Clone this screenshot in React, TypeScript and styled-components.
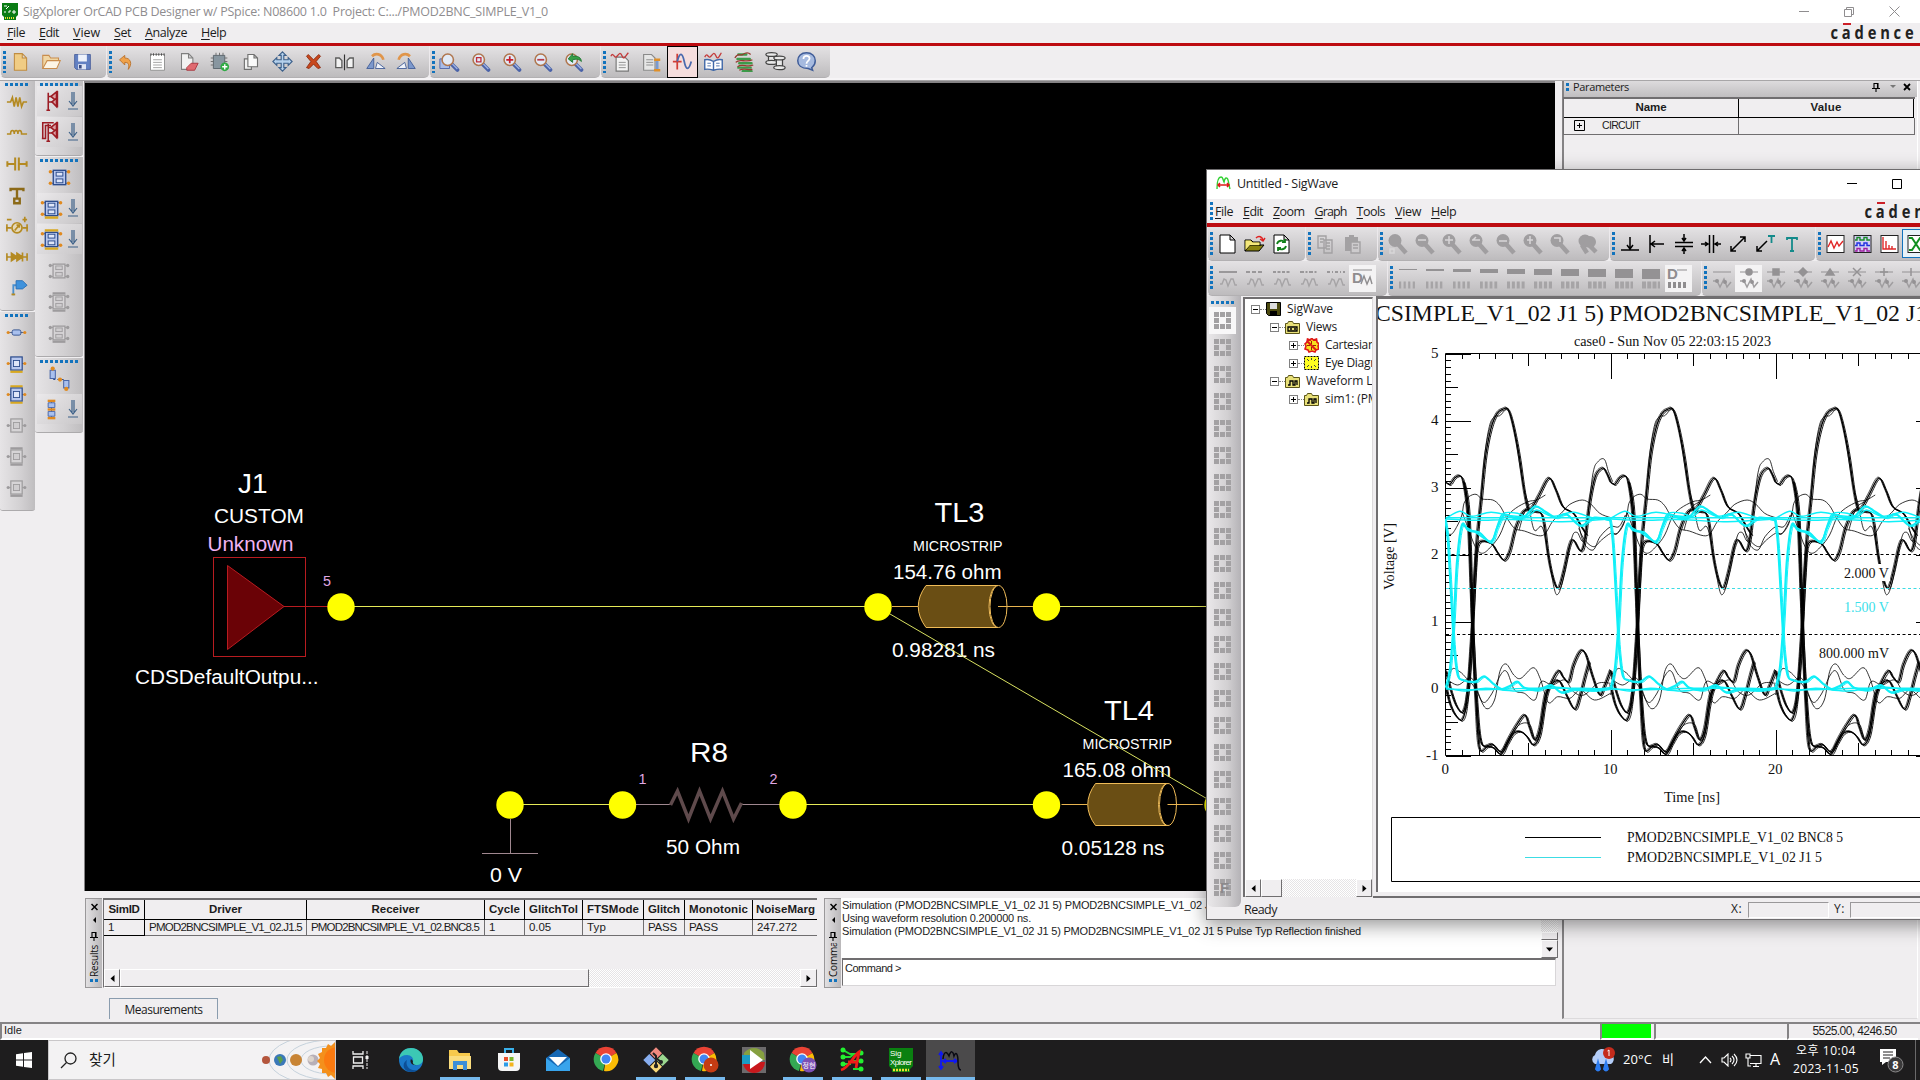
import React, { useLayoutEffect, useRef } from 'react';
import styled, { createGlobalStyle, css } from 'styled-components';

const UI = `"Open Sans", "Noto Sans", "Noto Sans CJK KR", sans-serif`;
const ARIAL = `"Liberation Sans", "Noto Sans CJK KR", sans-serif`;
const SERIF = `"Liberation Serif", serif`;

const Global = createGlobalStyle`
  * { box-sizing: border-box; }
  body { margin: 0; background: #f0eef0; overflow: hidden; }
  svg { display: block; flex: none; }
`;

/* ---------- text that keeps a given advance width ---------- */
const LabelBox = styled.span<{ $size: number; $color?: string; $font?: string; $bold?: boolean }>`
  display: inline-block;
  flex: none;
  white-space: pre;
  font: ${p => (p.$bold ? 700 : 400)} ${p => p.$size}px ${p => p.$font || UI};
  color: ${p => p.$color || '#1c1c1c'};
  line-height: 1.2;
`;
type LabelProps = { w: number; size?: number; color?: string; font?: string; bold?: boolean; hot?: boolean; children: string };
const Hot = styled.u`
  text-decoration-thickness: 1px;
  text-underline-offset: 2px;
`;
function Label({ w, size = 12, color, font, bold, hot, children }: LabelProps) {
  const ref = useRef<HTMLSpanElement>(null);
  useLayoutEffect(() => {
    const el = ref.current!;
    el.style.letterSpacing = '0px';
    const n = children.length;
    el.style.letterSpacing = `${(w - el.getBoundingClientRect().width) / n}px`;
  }, [w, children]);
  return (
    <LabelBox ref={ref} $size={size} $color={color} $font={font} $bold={bold}>
      {hot ? <><Hot>{children[0]}</Hot>{children.slice(1)}</> : children}
    </LabelBox>
  );
}

/* ---------- frame ---------- */
const Screen = styled.div`
  position: relative;
  width: 1920px;
  height: 1080px;
  display: flex;
  flex-direction: column;
  overflow: hidden;
  background: #f0eef0;
`;
const TitleBar = styled.div<{ $h: number; $pad: string; $gap: number }>`
  flex: none;
  height: ${p => p.$h}px;
  padding: ${p => p.$pad};
  display: flex;
  align-items: center;
  gap: ${p => p.$gap}px;
  background: #fff;
`;
const Caption = styled.div<{ $gap: number }>`
  margin-left: auto;
  display: flex;
  align-items: center;
  gap: ${p => p.$gap}px;
`;
const MenuBar = styled.div<{ $h: number; $pad: string }>`
  flex: none;
  height: ${p => p.$h}px;
  padding: ${p => p.$pad};
  display: flex;
  align-items: center;
  gap: 10px;
  background: #f0eef0;
`;
const MainMenuBar = styled(MenuBar)`gap: 14px;`;
const RedRule = styled.div<{ $h: number }>`
  flex: none;
  height: ${p => p.$h}px;
  background: #bd0b10;
`;
const Brand = styled.div`
  flex: none;
  margin-left: auto;
  display: flex;
`;
const WinBrand = styled(Brand)`margin-left: 396px;`;
const Toolbars = styled.div<{ $h: number }>`
  flex: none;
  height: ${p => p.$h}px;
  display: flex;
  background: #f0eef0;
`;
const ToolStripRow = styled.div`
  display: flex;
  width: 1920px;
  height: 34px;
  border-bottom: 2px solid #f6f4f6;
  box-shadow: 0 1px 0 #a8a6a8;
`;
const Group = styled.div<{ $w: number; $cell: number }>`
  flex: none;
  width: ${p => p.$w}px;
  padding-left: 2px;
  display: flex;
  align-items: center;
  background: linear-gradient(#e4e2e4, #cfcdcf 55%, #bdbbbd);
  border-radius: 0 0 5px 5px;
  border-left: 1px solid #ece9ec;
  border-bottom: 1px solid #b2b0b2;
  > div { width: ${p => p.$cell}px; }
`;
const Grip = styled.i<{ $h?: number; $tight?: boolean }>`
  flex: none;
  width: 3px;
  height: ${p => p.$h || 22}px;
  margin-right: ${p => (p.$tight ? -1 : 1)}px;
  background: repeating-linear-gradient(#1273bd 0 3px, transparent 3px 5px);
`;
const HGrip = styled.i<{ $w: number }>`
  flex: none;
  width: ${p => p.$w}px;
  height: 3px;
  background: repeating-linear-gradient(90deg, #1273bd 0 3px, transparent 3px 5px);
`;
const Cell = styled.div<{ $on?: 'box' | 'white' | 'blue' }>`
  flex: none;
  height: 100%;
  display: flex;
  align-items: center;
  justify-content: center;
  ${p => p.$on === 'box' && css`height: 32px; background: #f5dede; outline: 1px solid #000; outline-offset: -1px;`}
  ${p => p.$on === 'white' && css`height: 27px; background: #f4f3f4;`}
  ${p => p.$on === 'blue' && css`height: 27px; background: #e8f2f8; outline: 1px solid #1273bd;`}
`;

/* ---------- left dock ---------- */
const Workspace = styled.div`
  flex: none;
  height: 941px;
  display: flex;
`;
const LeftDock = styled.div`
  flex: none;
  width: 84px;
  display: flex;
`;
const DockCol = styled.div<{ $w: number }>`
  width: ${p => p.$w}px;
  display: flex;
  flex-direction: column;
  gap: 1px;
`;
const VGroup = styled.div<{ $h: number; $shift?: number }>`
  flex: none;
  height: ${p => p.$h}px;
  padding-top: 2px;
  padding-right: ${p => p.$shift || 0}px;
  display: flex;
  flex-direction: column;
  align-items: center;
  background: linear-gradient(90deg, #e6e4e6, #d2d0d2 60%, #bfbdbf);
  border-bottom: 1px solid #acaaac;
  border-radius: 0 0 3px 3px;
`;
const VCell = styled.div<{ $split?: boolean }>`
  flex: none;
  width: 100%;
  height: 31px;
  display: flex;
  align-items: center;
  justify-content: center;
  ${p => p.$split && css`
    width: 45px;
    height: 30px;
    margin-bottom: 1px;
    justify-content: space-between;
    padding: 0 3px 0 3px;
    background: linear-gradient(135deg, #ebe9eb, #c9c7c9);
  `}
`;

/* ---------- centre ---------- */
const Center = styled.div`
  flex: none;
  width: 1478px;
  display: flex;
  flex-direction: column;
`;
const Canvas = styled.div`
  height: 810px;
  width: 1471px;
  border-top: 2px solid #858385;
  border-left: 1px solid #858385;
  background: #000;
  overflow: hidden;
`;
const DockRow = styled.div`
  margin-top: 7px;
  padding-left: 1px;
  display: flex;
  gap: 7px;
  height: 90px;
`;
const DockPane = styled.div<{ $w: number }>`
  flex: none;
  width: ${p => p.$w}px;
  display: flex;
`;
const Strip = styled.div`
  flex: none;
  width: 17px;
  border: 1px solid #9a989a;
  border-right: 0;
  background: linear-gradient(90deg, #e2e0e2, #bab8ba);
  display: flex;
  flex-direction: column;
  align-items: center;
  padding: 4px 0 3px;
`;
const StripText = styled.div`
  writing-mode: vertical-rl;
  transform: rotate(180deg);
  font: 10px/13px ${UI};
  letter-spacing: -0.2px;
  color: #111;
  height: 34px;
  overflow: hidden;
  margin: 2px 0 2px;
  white-space: nowrap;
`;
const ResultsBody = styled.div`
  flex: 1;
  margin-left: 1px;
  border: solid #706e70;
  border-width: 2px 0 0 1px;
  border-bottom: 1px solid #fff;
  display: flex;
  flex-direction: column;
  justify-content: space-between;
  overflow: hidden;
`;
const Table = styled.div`width: 100%;`;
const Row = styled.div<{ $head?: boolean }>`
  display: flex;
  height: ${p => (p.$head ? 20 : 16)}px;
`;
const Th = styled.div<{ $w: number }>`
  flex: none;
  width: ${p => p.$w}px;
  display: flex;
  align-items: center;
  justify-content: center;
  border-right: 1px solid #000;
  border-bottom: 1px solid #000;
  overflow: hidden;
`;
const Td = styled.div<{ $w: number; $key?: boolean }>`
  flex: none;
  width: ${p => p.$w}px;
  padding-left: 4px;
  display: flex;
  align-items: center;
  border-right: 1px solid ${p => (p.$key ? '#000' : '#706e70')};
  border-bottom: 1px solid ${p => (p.$key ? '#000' : '#706e70')};
  overflow: hidden;
`;
const HScroll = styled.div`
  flex: none;
  height: 18px;
  display: flex;
  background: repeating-conic-gradient(#fff 0 25%, #e6e4e6 0 50%) 0 0 / 2px 2px;
`;
const Btn3d = styled.div<{ $w: number; $h: number }>`
  flex: none;
  width: ${p => p.$w}px;
  height: ${p => p.$h}px;
  background: #f0eef0;
  border: 1px solid;
  border-color: #fff #706e70 #706e70 #fff;
  display: flex;
  align-items: center;
  justify-content: center;
`;
const Spacer = styled.div`flex: 1;`;
const CmdBody = styled.div`
  flex: 1;
  display: flex;
  flex-direction: column;
`;
const Log = styled.div`
  height: 60px;
  background: #fff;
  display: flex;
  justify-content: space-between;
`;
const LogLines = styled.div`
  display: flex;
  flex-direction: column;
  align-items: flex-start;
  padding: 1px 0 0 1px;
  > * { height: 13px; line-height: 13px; }
`;
const VScroll = styled.div`
  width: 17px;
  display: flex;
  flex-direction: column;
  justify-content: flex-end;
  background: repeating-conic-gradient(#fff 0 25%, #e6e4e6 0 50%) 0 0 / 2px 2px;
`;
const Prompt = styled.div`
  height: 28px;
  margin: 0 2px 0 1px;
  padding: 2px 0 0 2px;
  display: flex;
  align-items: flex-start;
  background: #fff;
  border: 1px solid #d8d6d8;
  border-top: 2px solid #706e70;
  border-left: 1px solid #706e70;
`;
const Tab = styled.div`
  width: 109px;
  height: 21px;
  margin: 10px 0 0 25px;
  border: 1px solid #8a9cae;
  border-bottom: 0;
  display: flex;
  align-items: flex-end;
  padding-bottom: 2px;
  justify-content: center;
`;

/* ---------- parameters pane ---------- */
const RightDock = styled.div`
  flex: 1;
  margin: 0 2px 3px 0;
  border-left: 2px solid #858385;
  border-right: 1px solid #fff;
  border-bottom: 1px solid #dcdadc;
`;
const PaneHead = styled.div`
  height: 16px;
  padding: 0 6px 4px 2px;
  display: flex;
  align-items: center;
  gap: 4px;
  background: linear-gradient(#dddbdd, #c0bec0);
`;
const HeadDots = styled.i`
  width: 3px;
  height: 8px;
  background: linear-gradient(#1273bd 0 3px, transparent 3px 5px, #1273bd 5px);
`;
const HeadTools = styled.div`
  margin-left: auto;
  display: flex;
  align-items: center;
  gap: 5px;
`;
const PinSlot = styled.span`margin-right: 2px;`;
const ParamTable = styled.div`
  width: 352px;
  border-top: 2px solid #706e70;
  border-left: 1px solid #706e70;
  margin-left: -1px;
`;
const ParamHead = styled(Row)`height: 19px;`;
const ParamRow = styled(Row)`height: 17px;`;
const ParamCell = styled(Td)`gap: 17px; padding-left: 10px; padding-bottom: 1px;`;

/* ---------- status + taskbar ---------- */
const Status = styled.div`
  flex: none;
  height: 18px;
  display: flex;
  border-top: 2px solid #858385;
`;
const StatusCell = styled.div<{ $w: number; $green?: boolean }>`
  flex: none;
  width: ${p => p.$w}px;
  padding-left: 2px;
  display: flex;
  align-items: center;
  border-left: 2px solid #858385;
  ${p => p.$green && 'background: #00ff00; background-clip: padding-box; border-right: 3px solid #f0eef0;'}
  border-bottom: 2px solid #fff;
`;
const CoordCell = styled(StatusCell)`justify-content: center;`;
const Taskbar = styled.div`
  flex: none;
  height: 40px;
  display: flex;
  background: #1e1d1e;
`;
const Start = styled.div`
  width: 48px;
  display: flex;
  align-items: center;
  justify-content: center;
`;
const Search = styled.div`
  width: 288px;
  border: 1px solid #c9c7c9;
  background: #f3f2f3;
  display: flex;
  align-items: center;
  padding-left: 11px;
  gap: 12px;
  overflow: hidden;
`;
const PlanetSlot = styled.div`margin-left: auto;`;
const Task = styled.div<{ $line?: boolean; $active?: boolean; $w?: number }>`
  flex: none;
  width: ${p => p.$w || 49}px;
  display: flex;
  align-items: center;
  justify-content: center;
  background: ${p => (p.$active ? '#4b4a4b' : 'transparent')};
  ${p => p.$line && css`
    background-image: linear-gradient(#76b9ed, #76b9ed);
    background-size: ${p.$active ? '100%' : '40px'} 3px;
    background-position: center bottom;
    background-repeat: no-repeat;
  `}
`;
const Tray = styled.div`
  margin-left: auto;
  padding-right: 4px;
  display: flex;
  align-items: center;
`;
const TrayItem = styled.div<{ $w: number }>`
  flex: none;
  width: ${p => p.$w}px;
  display: flex;
  align-items: center;
`;
const NoticeSlot = styled.div`padding-left: 10px;`;
const Clock = styled.div`
  width: 86px;
  display: flex;
  flex-direction: column;
  align-items: center;
  gap: 3px;
`;
const PeekEdge = styled.i`
  width: 1px;
  height: 40px;
  background: #6a696a;
`;

/* ---------- SigWave window ---------- */
const Win = styled.div`
  position: absolute;
  left: 1206px;
  top: 169px;
  width: 760px;
  height: 751px;
  display: flex;
  flex-direction: column;
  background: #f0eef0;
  border: 1px solid #6e6c6e;
  border-width: 1px 0 1px 1px;
  box-shadow: 0 5px 18px rgba(0, 0, 0, 0.42);
`;
const WinFoot = styled.div`
  display: flex;
  height: 623px;
`;
const WinMain = styled.div`
  display: flex;
  flex-direction: column;
`;
const WinBody = styled.div`
  flex: none;
  height: 604px;
  display: flex;
`;
const WinMenuItem = styled.span<{ $first: boolean }>`
  display: flex;
  margin-left: ${p => (p.$first ? -7 : 0)}px;
`;
const SideTools = styled.div`
  flex: none;
  width: 34px;
  height: 611px;
  padding: 5px 3px 0 0;
  display: flex;
  flex-direction: column;
  align-items: center;
  background: linear-gradient(90deg, #eae8ea, #d2d0d2 60%, #b4b2b6);
  border-radius: 0 0 6px 6px;
`;
const SideList = styled.div`margin-top: 3px;`;
const SideCell = styled.div<{ $on?: boolean }>`
  flex: none;
  width: 27px;
  height: 27px;
  display: flex;
  align-items: center;
  justify-content: center;
  background: ${p => (p.$on ? '#f8f7f8' : 'transparent')};
`;
const Tree = styled.div`
  flex: none;
  width: 130px;
  height: 600px;
  margin: 1px 0 0 2px;
  border: solid #706e70;
  border-width: 2px 0 0 2px;
  border-right: 1px solid #dcdadc;
  background: #fff;
  display: flex;
  flex-direction: column;
  justify-content: space-between;
`;
const TreeRows = styled.div`
  padding-top: 1px;
  overflow: hidden;
`;
const TreeRow = styled.div<{ $in: number }>`
  height: 18px;
  padding-left: ${p => 6 + p.$in * 19}px;
  display: flex;
  align-items: center;
  white-space: nowrap;
  overflow: hidden;
`;
const Stub = styled.i`
  flex: none;
  width: 6px;
  border-top: 1px dotted #808080;
`;
const TreeIcon = styled.span`margin-right: 6px;`;
const Expander = styled.span`
  flex: none;
  width: 9px;
  height: 9px;
  border: 1px solid #808080;
  display: flex;
  align-items: center;
  justify-content: center;
`;
const PlotCol = styled.div`
  height: 602px;
  border-bottom: 2px solid #706e70;
`;
const Plot = styled.div`
  flex: none;
  width: 560px;
  height: 596px;
  margin: 0 0 0 3px;
  border: solid #706e70;
  border-width: 3px 0 0 2px;
  background: #fff;
  overflow: hidden;
`;
const WinStatus = styled.div`
  height: 19px;
  display: flex;
  align-items: center;
`;
const Field = styled.div<{ $w: number }>`
  width: ${p => p.$w}px;
  height: 16px;
  border: 1px solid #9a989a;
  border-right-color: #fff;
  border-bottom-color: #fff;
`;
const ReadyText = styled.div`
  display: flex;
  width: 490px;
  padding-left: 3px;
`;
const Coord = styled.div<{ $w: number }>`
  display: flex;
  width: ${p => p.$w}px;
`;
const YCoord = styled(Coord)`padding-left: 5px;`;

/* ---------- drawings ---------- */
const S = ({ w = 24, h = 24, vb, children }: { w?: number; h?: number; vb?: string; children: React.ReactNode }) => (
  <svg width={w} height={h} viewBox={vb || `0 0 ${w} ${h}`} fill="none">{children}</svg>
);

const Cadence = () => (
  <S w={92} h={20}>
    <g transform="scale(.84 1)">
      <text x="3" y="16" fontFamily="Open Sans" fontWeight="700" fontSize="17.500" fill="#222" textLength="99" lengthAdjust="spacing">cadence</text>
    </g>
    <rect x="15" y="0" width="8" height="2" fill="#cc2028" />
  </S>
);

const icons: Record<string, React.ReactNode> = {};
const lens = (inner: React.ReactNode) => (
  <>
    <path d="M14.500 15l6.500 6.500" stroke="#4a62a8" strokeWidth="4.500" strokeLinecap="round" />
    <path d="M15 14.500l6 6" stroke="#9db2e4" strokeWidth="1.500" />
    <circle cx="10" cy="10" r="6.500" fill="#e2eaf6" stroke="#b0764e" strokeWidth="1.800" />
    {inner}
  </>
);
Object.assign(icons, {
  new: <path d="M5 3h9l5 5v14H5z M14 3v5h5" fill="#f0cc84" stroke="#c08c40" strokeWidth="1.200" />,
  open: <><path d="M2 20V5h7l2 3h9v4" fill="#f0d6a4" stroke="#c98d4e" strokeWidth="1.200" /><path d="M2 20l5-9h15l-4 9z" fill="#fdf5e6" stroke="#c98d4e" strokeWidth="1.200" /></>,
  save: <><path d="M3 4h18v17H5l-2-2z" fill="#6280c2" stroke="#4a609c" /><path d="M7 4h10v8H7z" fill="#eef2fb" /><path d="M7 15h9v6H7z" fill="#dfe5f4" /><path d="M8 16h3v4H8z" fill="#3b4c82" /></>,
  undo: <path d="M4 10l6-5v3c7 0 9 7 4 13 1-5 1-8-4-8v3z" fill="#f0a24a" stroke="#b8702c" />,
  pad: <><path d="M4 4h16v18H4z" fill="#fff" stroke="#8a8a8a" /><path d="M4 4h16" stroke="#444" strokeWidth="3" strokeDasharray="1 2" /><path d="M7 10h10M7 13h10M7 16h10M7 19h10" stroke="#9a9a9a" /></>,
  erase: <><path d="M4 3h8l5 5v13H4z M12 3v5h5" fill="#f2f2f2" stroke="#7f7f7f" strokeWidth="1.200" /><path d="M10 19l5-5h8l-4 8h-9z" fill="#e06a70" stroke="#a8343c" /></>,
  chip: <><path d="M5 5h13v15H5z" fill="#8896a0" stroke="#566068" /><path d="M2 8h3M2 12h3M2 16h3M18 8h3M18 12h3M8 2v3M12 2v3M16 2v3" stroke="#666" /><circle cx="18" cy="18" r="5" fill="#2faa44" /><path d="M15 18h6M18 15v6" stroke="#fff" strokeWidth="1.600" /></>,
  copy: <><path d="M5 9h8v12H5z" fill="#f2f2f2" stroke="#707070" strokeWidth="1.300" /><path d="M9 4h7l4 4v10H9z M16 4v4h4" fill="#fafafa" stroke="#707070" strokeWidth="1.300" /></>,
  move: <path d="M12 1l4 4h-2.500v5h5V7.500L23 12l-4.500 4.500V14h-5v5H16l-4 4-4-4h2.500v-5h-5v2.500L1 12l4.500-4.500V10h5V5H8z" fill="#b4d0ec" stroke="#3d608a" strokeWidth="1.300" />,
  del: <path d="M6 4l6 6 6-6 2 2-5 6 5 7-3 1-5-5-5 5-3-1 5-7-5-6z" fill="#c8481e" stroke="#8a2a10" />,
  mirror: <><path d="M2 8h4l3 3v8H2zM22 8h-4l-3 3v8h7z" fill="#f2f2f2" stroke="#5c5c5c" strokeWidth="1.500" /><path d="M12 4v18" stroke="#333" strokeWidth="1.300" /></>,
  rotl: <><path d="M2 20l8-12v12z" fill="#7c98cc" stroke="#405c96" /><path d="M12 20h11l-9-7z" fill="#eef2fa" stroke="#405c96" /><path d="M8 6c4-4 11-3 13 4" stroke="#e0954a" strokeWidth="3" /></>,
  rotr: <><path d="M22 20L14 8v12z" fill="#7c98cc" stroke="#405c96" /><path d="M12 20H1l9-7z" fill="#eef2fa" stroke="#405c96" /><path d="M16 6C12 2 5 3 3 10" stroke="#e0954a" strokeWidth="3" /></>,
  zwin: <><path d="M1 9h11v11H1z" fill="#a9bce8" stroke="#4a62a8" />{lens(null)}</>,
  zfit: lens(<path d="M7.500 7.500h5v5h-5z" stroke="#c02c3c" strokeWidth="1.500" />),
  zin: lens(<path d="M6 10h8M10 6v8" stroke="#c8202c" strokeWidth="2" />),
  zout: lens(<path d="M6 10h8" stroke="#b83a48" strokeWidth="2" />),
  zprev: lens(<path d="M6 9l5-6v3c6-1 10 2 10 6-3-3-6-3-10-2v3z" fill="#37a048" stroke="#1c7430" />),
  wdoc: <><path d="M7 7h10l4 4v12H7z" fill="#f2f2f2" stroke="#777" strokeWidth="1.300" /><path d="M10 13h8M10 16h8M10 19h8" stroke="#888" /><path d="M1 6c3-6 4 4 7 0s4-5 6 0 4-1 7-4" stroke="#c43a3a" strokeWidth="1.500" /></>,
  pdoc: <><path d="M3 4h9l4 4v14H3z" fill="#e6e6e6" stroke="#8a8a8a" strokeWidth="1.300" /><path d="M6 10h8M6 13h8M6 16h8" stroke="#888" /><path d="M18.500 11v10" stroke="#7a9ad0" strokeWidth="3" /><path d="M15 10h7M15 22h7" stroke="#e08f28" strokeWidth="3" /></>,
  sine: <><path d="M1 12h10M6 3v18" stroke="#d23c34" strokeWidth="2" /><path d="M6 12c3-12 6-10 8 0s5 11 8 0" stroke="#4a6aae" strokeWidth="2" /></>,
  book: <><path d="M2 10c4-1 7 0 10 2 3-2 6-3 10-2v11c-4-1-7 0-10 1-3-1-6-2-10-1z M12 12v10" fill="#fff" stroke="#4068a8" strokeWidth="1.600" /><path d="M5 14h4M5 17h4M15 14h4M15 17h4" stroke="#4068a8" /><path d="M2 7c3-7 4 3 7-1s4-5 6 0 4-1 6-4" stroke="#c43a3a" strokeWidth="1.500" /></>,
  coil: <><path d="M5 4h9M4 9h14M6 14h14M5 19h14M10 23h10" stroke="#3c9a4a" strokeWidth="2.800" strokeLinecap="round" /><path d="M1 8c4-7 6-2 9-4s6-3 9 0M2 13c4-5 12 1 19-3M4 18c5-4 11 1 18-2M6 22c5-3 10 0 15-1" stroke="#983a30" strokeWidth="1.500" /></>,
  spool: <><g fill="#e8e8e8" stroke="#444" strokeWidth="1.400"><path d="M4 4v8h7V4z" /><ellipse cx="7.500" cy="4" rx="6.500" ry="2.200" /><ellipse cx="7.500" cy="13" rx="6.500" ry="2.200" /><path d="M13 9v9h7V9z" /><ellipse cx="16.500" cy="8" rx="6.500" ry="2.200" /><ellipse cx="16.500" cy="19" rx="6.500" ry="2.200" /></g></>,
  help: <><path d="M12 2c6 0 10 4 10 9s-3 7-4 8l1 3-5-2c-8 0-12-4-12-9s4-9 10-9z" fill="#a6badf" stroke="#3f5c98" strokeWidth="1.700" /><path d="M8.500 9c0-5 7-4 7-.5 0 3-3.500 2.500-3.500 6M12 16v2" stroke="#fff" strokeWidth="2" /></>,
});
const I = ({ n, s = 21 }: { n: string; s?: number }) => <S w={s} h={s} vb="0 0 24 24">{icons[n]}</S>;

const G = '#b48a22';
const N = '#9d9b9d';
const B = '#2c4c8c';
const ports = (c: string, ys: number[]) => ys.map(y => (
  <g key={y}><path d={`M3 ${y}h18`} stroke={c === N ? N : '#4a5a80'} /><circle cx="2.500" cy={y} r="1.800" fill={c} /><circle cx="21.500" cy={y} r="1.800" fill={c} /></g>
));
/* kind 0: bare section, 1: plane below, 2: planes above and below */
const pcb = (c: 'c' | 'g', kind: number, tall = true) => {
  const live = c === 'c';
  const st = live ? B : N, fi = live ? '#b8c8ee' : '#d6d4d6', inner = live ? '#dfe6f8' : '#cfcdcf', gold = live ? '#d8a820' : N;
  return (
    <>
      {ports(live ? '#e08a20' : N, tall ? [6, 18] : [12])}
      <rect x="5.500" y="4.500" width="13" height="15" fill={fi} stroke={st} strokeWidth="1.400" />
      <rect x="8.500" y={tall ? 6.500 : 8.500} width="7" height={tall ? 4 : 7} fill={inner} stroke={st} />
      {tall && <rect x="8.500" y="13.500" width="7" height="4" fill={inner} stroke={st} />}
      {kind % 2 === 1 && <path d="M5 21.500h14" stroke={gold} strokeWidth="2.500" />}
      {kind === 2 && <path d="M5 2.500h14M5 21.500h14" stroke={gold} strokeWidth="2.200" />}
    </>
  );
};
const leftA = [
  <path key="r" d="M1 12h4l2-5 2 10 2-10 2 10 2-10 2 10 2-5h4" stroke={G} strokeWidth="1.800" />,
  <path key="l" d="M1 13h4c0-5 4-5 4 0 0-5 4-5 4 0 0-5 4-5 4 0h6" stroke={G} strokeWidth="1.700" />,
  <path key="c" d="M1 12h9M10 5v14M14 5v14M14 12h9M1.500 9v6M22.500 9v6" stroke={G} strokeWidth="2.200" />,
  <path key="t" d="M5 5.500h14M5 4v4M19 4v4M12 5v12M9 16h6v5H9z" stroke="#8c6a18" strokeWidth="2.600" />,
  <g key="s" stroke={G} strokeWidth="1.800"><path d="M0 14h6M18 14h6M1 10v8M23 10v8M1 5h5M18 5h5M20.500 2v6" /><circle cx="12" cy="14" r="5.500" fill="#e4d8b8" /><path d="M9.500 17l5-6M11.500 11h3v3" /></g>,
  <path key="d" d="M1 12h22M1 8v8M23 8v8M6 8v8l6-4zM12 8v8l6-4zM18 7v10" stroke={G} strokeWidth="1.800" fill={G} />,
  <g key="p"><path d="M8 20V9h3" stroke="#4a90d0" strokeWidth="2" /><path d="M11 4h7l5 5-5 4h-7z" fill="#3f92dc" stroke="#2c70b4" /><path d="M6 19h4" stroke={G} strokeWidth="2" /></g>,
];
const leftB = [
  <g key="0">{ports('#e08a20', [12])}<rect x="7" y="9" width="10" height="6" rx="2" fill="#a9c0ee" stroke={B} /></g>,
  <g key="1">{pcb('c', 1, false)}</g>, <g key="2">{pcb('c', 2, false)}</g>,
  <g key="3">{pcb('g', 0, false)}</g>, <g key="4">{pcb('g', 2, false)}</g>, <g key="5">{pcb('g', 1, false)}</g>,
];
const gate = (two: boolean) => (
  <g stroke="#9c1c24" strokeWidth="1.700">
    <path d="M9 22V3M9 7h5M7 22h4M9 13h5" />
    <path d="M12 7l6-5v10z" fill="#dca0a4" /><path d="M18 9v9l-5-5z" fill="#dca0a4" /><path d="M19 1v18" />
    {two && <path d="M3 19V2h12M2 19h4M6 20V5h6" />}
  </g>
);
const Down = () => <S w={12} h={20}><path d="M5 1v13M7 1v13M2 10l4 5 4-5M1 18h10" stroke="#3c6088" strokeWidth="1.200" /></S>;
const stack = <g><path d="M12 3v18" stroke={B} /><path d="M8.500 5h7v5h-7zM8.500 14h7v5h-7z" fill="#a9c0ee" stroke="#4a66a8" />{[3, 12, 21].map(y => <path key={y} d={`M8 ${y}h8`} stroke="#e08a20" strokeWidth="2.500" />)}</g>;
const stair = <g><path d="M3 4h5v8H3zM16 14h5v7h-5z" fill="#a9c0ee" stroke="#4a66a8" /><path d="M6 13h12" stroke={B} strokeDasharray="2 2" /><g fill="#e08a20"><circle cx="5.500" cy="2.500" r="2" /><circle cx="12.500" cy="13" r="2" /><circle cx="18.500" cy="22" r="2" /></g></g>;

/* SigWave icons */
const gLens = (extra?: React.ReactNode) => <S w={22} h={22}><circle cx="8" cy="7.500" r="6.500" fill="#a09ea0" /><path d="M11 11l8 9" stroke="#a09ea0" strokeWidth="4.500" />{extra}</S>;
const gl = (d: string) => <path d={d} stroke="#d8d6d8" strokeWidth="1.500" />;
const K = ({ d, c = '#000', w = 1.5 }: { d: string; c?: string; w?: number }) => <S w={20} h={20}><path d={d} stroke={c} strokeWidth={w} /></S>;
const Doc = ({ children }: { children?: React.ReactNode }) => <S w={19} h={20}><path d="M2 1h10l5 5v13H2z M12 1v5h5" fill="#fff" stroke="#000" />{children}</S>;
const WaveBox = ({ children, bg = '#fff' }: { children: React.ReactNode; bg?: string }) => <S w={19} h={20}><rect x="1" y="1.500" width="17" height="17" fill={bg} stroke="#222" />{children}</S>;
const LineStyle = ({ dash }: { dash?: string }) => (
  <S w={20} h={20}><path d="M1 4h18" stroke="#9a989a" strokeWidth="2" strokeDasharray={dash} /><path d="M2 16h2l2-5 2 1 2 6 3-7h2l2 6h2" stroke="#a6a4a6" strokeWidth="1.400" /></S>
);
const LineWidth = ({ t }: { t: number }) => (
  <S w={20} h={22}><path d={`M1 ${2 + t / 2}h18`} stroke="#949294" strokeWidth={t} /><path d="M1 18h18" stroke="#a6a4a6" strokeWidth="7" strokeDasharray={`${2 + t / 5} ${2.5 - t / 8}`} /></S>
);
const marks = ['', 'M7 4a3 3 0 1 0 6 0a3 3 0 1 0-6 0', 'M7 1h6v6H7z', 'M10 0l4 4-4 4-4-4z', 'M10 1l4 6H6z', 'M6 0l8 8M14 0l-8 8', 'M10 0v8M6 4h8', 'M10 0v8'];
const Marker = ({ d }: { d: string }) => (
  <S w={20} h={22}><path d="M1 5h18" stroke="#949294" /><g transform="translate(0 1)"><path d={d} fill="#949294" stroke="#949294" strokeWidth="1.500" /></g><path d="M1 14h4l3 6 4-8 3 8 4-5" stroke="#a09ea0" strokeWidth="1.500" /><circle cx="5" cy="14" r="2" fill="#949294" /><circle cx="13" cy="15" r="2" fill="#949294" /></S>
);
const DIcon = ({ bars }: { bars?: boolean }) => (
  <S w={22} h={24}><text x="0" y={bars ? 13 : 17} fontFamily="Liberation Sans" fontWeight="700" fontSize="15" fill="#8f8d8f">D</text>
    {bars ? <path d="M1 19h18" stroke="#8f8d8f" strokeWidth="6" strokeDasharray="3 2" /> : <path d="M9 18l3-8 3 8 3-7 2 7" stroke="#8f8d8f" strokeWidth="1.400" />}
    <path d={bars ? 'M10 4h10' : 'M1 4h19'} stroke="#8f8d8f" /></S>
);
const GridIcon = ({ last }: { last?: boolean }) => (
  <S w={17} h={17}>
    {[0, 6, 12].map(x => [0, 6, 12].map(y => (x === 6 && y === 6) ? null : <rect key={`${x}-${y}`} x={x} y={y} width="5" height="5" fill="#a3a1a3" />))}
    {last && <text x="6" y="14" fontFamily="Liberation Sans" fontWeight="700" fontSize="15" fill="#8b898b">F</text>}
  </S>
);
const Tri = ({ d }: { d: 'l' | 'r' | 'd' }) => <S w={7} h={7}><path d={d === 'l' ? 'M5.500 0v7L1.500 3.500z' : d === 'r' ? 'M1.500 0v7l4-3.500z' : 'M0 1.500h7L3.500 5.500z'} fill="#000" /></S>;
const PlusBox = ({ plus }: { plus?: boolean }) => <Expander><S w={7} h={7}><path d={plus ? 'M1 3.500h5M3.500 1v5' : 'M1 3.500h5'} stroke="#000" /></S></Expander>;
const Folder = ({ eye }: { eye?: boolean }) => <S w={15} h={13}><path d="M.5 12.500v-10h2l1-2h4l1 2h6v10z" fill="#e8e078" stroke="#5a5418" />{eye ? <path d="M3 6h9v4H3zM5 8h2M9 8h2" stroke="#000" strokeWidth="1.300" /> : <path d="M3 10h2V6h3v4h2V6h2v4" stroke="#000" strokeWidth="1.300" />}</S>;
const Pin = () => <S w={8} h={10}><path d="M0 6.500h8M2 6.500V1.500h4V6.500M5.500 2v4M4 7v3" stroke="#000" strokeWidth="1.100" /></S>;

/* ---------- schematic ---------- */
const VT = styled.text<{ $s: number; $c?: string }>`
  font: ${p => p.$s}px ${ARIAL};
  fill: ${p => p.$c || '#fff'};
`;
const T = ({ x, y, w, s, c, children }: { x: number; y: number; w: number; s: number; c?: string; children: string }) => (
  <VT x={x} y={y} $s={s} $c={c} textLength={w} lengthAdjust="spacingAndGlyphs">{children}</VT>
);
const Line = ({ name, z, ns, dx, dy }: { name: string; z: string; ns: string; dx: number; dy: number }) => (
  <g transform={`translate(${dx} ${dy})`}>
    <T x={934.500} y={522} w={50} s={27}>{name}</T>
    <T x={913} y={551} w={89.500} s={14.5}>MICROSTRIP</T>
    <T x={893} y={578.500} w={108.500} s={20}>{z}</T>
    <T x={892} y={656.500} w={103} s={20}>{ns}</T>
    <path d="M892 606.500h26M998 606.500h35" stroke="#e8b450" />
    <path d="M926 585.500H998A9 21 0 0 0 998 627.500H926Q910.500 606.500 926 585.500z" fill="#6a4e14" stroke="#f0bc58" />
    <ellipse cx="998.500" cy="606.500" rx="8.500" ry="21" fill="#000" stroke="#f0bc58" />
    <path d="M998 606.500h35" stroke="#e8b450" />
  </g>
);
const Schematic = () => (
  <svg width="1469" height="807" viewBox="85 83 1469 807" fill="none">
    <path d="M341 606.500H878M1047 606.500H1240M510 804.500H622M793 804.500H1047" stroke="#e6ea58" />
    <T x={238} y={493} w={29.500} s={27}>J1</T>
    <T x={214} y={522.500} w={90} s={20}>CUSTOM</T>
    <T x={207.500} y={551} w={86} s={20} c="#f0b4f4">Unknown</T>
    <rect x="213.500" y="557.500" width="92" height="99" stroke="#b81c20" />
    <path d="M227.500 565.500L284 606.500 227.500 649.500z" fill="#6a0206" stroke="#b81c20" />
    <path d="M284 606.500h44" stroke="#b81c20" />
    <T x={323} y={586} w={8} s={14} c="#e0a8e4">5</T>
    <T x={135} y={684} w={183.500} s={20}>CDSDefaultOutpu...</T>
    <Line name="TL3" z="154.76 ohm" ns="0.98281 ns" dx={0} dy={0} />
    <Line name="TL4" z="165.08 ohm" ns="0.05128 ns" dx={169.500} dy={198} />
    <path d="M878 607L1216 804" stroke="#d8e060" />
    <T x={690} y={762} w={38} s={27}>R8</T>
    <T x={638.500} y={784} w={8} s={14} c="#e0a8e4">1</T>
    <T x={769.500} y={784} w={8} s={14} c="#e0a8e4">2</T>
    <path d="M636 804.500h34M742 804.500h38M510.500 819v34M482 853.500h56" stroke="#a08890" />
    <path d="M670.500 805l7-14 11 28 11-28 11 28 12-28 11 28 8-16" stroke="#5f4a4c" strokeWidth="3.500" />
    <T x={666} y={853.500} w={74} s={20}>50 Ohm</T>
    <T x={490} y={882} w={32} s={20}>0 V</T>
    <g fill="#ff0">
      {[[341, 607], [878, 607], [1046.5, 607], [510, 805], [622.5, 805], [793, 805], [1046.5, 805], [1218, 805]].map(([x, y]) => <circle key={`${x}${y}`} cx={x} cy={y} r="13.700" />)}
    </g>
  </svg>
);

/* ---------- eye plot ---------- */
type P = [number, number];
const X0 = 1445.8, NS = 16.49, Y0 = 688.3, VOLT = 67;
/* knots are on a 470-unit period starting at 216; y is three units per pixel */
const px = ([x, y]: P): P => [X0 + ((x - 216) / 470.2) * 10 * NS, 295 + y / 3];
const spline = (pts: P[], j = 0) => {
  const q = pts.map(p => px([p[0] + j, p[1] + j * 0.8]));
  let d = `M${q[0][0].toFixed(1)} ${q[0][1].toFixed(1)}`;
  for (let i = 0; i < q.length - 1; i++) {
    const a = q[Math.max(0, i - 1)], b = q[i], c = q[i + 1], e = q[Math.min(q.length - 1, i + 2)];
    d += `C${(b[0] + (c[0] - a[0]) / 6).toFixed(1)} ${(b[1] + (c[1] - a[1]) / 6).toFixed(1)} ${(c[0] - (e[0] - b[0]) / 6).toFixed(1)} ${(c[1] - (e[1] - b[1]) / 6).toFixed(1)} ${c[0].toFixed(1)} ${c[1].toFixed(1)}`;
  }
  return d;
};
const bold: P[][] = [
  [[216, 1170], [228, 1225], [245, 1262], [264, 1273], [277, 1210], [291, 1000], [303, 760], [318, 600], [330, 480], [345, 400], [362, 356], [380, 342], [394, 343], [408, 390], [425, 480], [440, 590], [452, 645], [470, 650], [488, 655], [497, 690], [508, 780], [522, 850], [537, 880], [552, 830], [568, 755], [580, 735], [600, 768], [612, 740], [625, 630], [642, 545], [663, 519], [675, 535], [686, 562]],
  [[216, 562], [228, 568], [242, 548], [258, 543], [268, 570], [280, 680], [291, 960], [302, 1220], [312, 1360], [335, 1355], [352, 1358], [374, 1378], [392, 1345], [410, 1315], [430, 1310], [448, 1325], [466, 1350], [484, 1320], [498, 1230], [510, 1180], [537, 1128], [550, 1145], [567, 1160], [580, 1110], [600, 1068], [615, 1078], [635, 1145], [655, 1200], [668, 1175], [686, 1126]],
  [[216, 1126], [232, 1190], [248, 1235], [266, 1250], [280, 1180], [291, 1020], [300, 830], [310, 745], [345, 745], [362, 770], [382, 796], [398, 770], [415, 700], [437, 650], [460, 640], [482, 600], [510, 549], [530, 585], [550, 635], [580, 655], [600, 690], [618, 720]],
  [[268, 560], [282, 660], [292, 980], [304, 1220], [318, 1345], [350, 1348], [374, 1370], [396, 1330], [418, 1290], [442, 1260], [456, 1300], [470, 1335], [484, 1300], [500, 1200], [520, 1165], [540, 1158], [560, 1200], [584, 1243], [600, 1200], [612, 1150], [625, 1100]],
];
const thin: P[][] = [
  [[216, 710], [232, 718], [250, 690], [262, 660], [268, 625], [282, 605], [302, 598], [320, 612], [350, 615], [370, 632], [388, 665], [412, 700], [440, 708], [480, 722], [500, 715], [520, 680], [545, 655], [570, 628], [605, 615], [630, 628], [655, 655], [686, 668]],
  [[262, 650], [280, 700], [300, 755], [320, 775], [345, 755], [370, 720], [392, 665], [415, 640], [450, 620], [475, 615], [500, 600]],
  [[310, 700], [325, 500], [340, 395], [355, 365], [370, 362], [392, 345], [410, 400], [435, 560], [452, 630], [468, 705], [490, 695], [505, 760], [525, 880], [537, 896], [552, 845], [575, 730], [590, 712], [612, 730], [635, 540], [650, 500], [668, 493], [680, 530], [692, 560]],
  [[216, 1200], [232, 1125], [256, 1130], [275, 1150], [300, 1180], [330, 1240], [355, 1215], [370, 1130], [388, 1107], [410, 1140], [430, 1150], [465, 1118], [485, 1150], [508, 1222], [535, 1205], [570, 1210], [600, 1185], [640, 1215], [686, 1195]],
  [[216, 1150], [250, 1170], [290, 1150], [320, 1220], [345, 1200], [372, 1140], [390, 1130], [412, 1185], [440, 1195], [470, 1215], [488, 1160], [520, 1170], [555, 1155], [580, 1190], [610, 1200], [650, 1165], [686, 1165]],
  [[374, 1376], [395, 1335], [425, 1290], [455, 1288], [470, 1330], [485, 1310]],
  [[595, 700], [612, 735], [638, 755], [660, 735], [686, 715], [705, 715], [722, 690], [733, 650]],
  [[595, 690], [610, 745], [636, 765], [656, 725], [686, 695], [710, 695], [728, 660]],
  [[425, 705], [445, 640], [475, 618]],
];
const cyan: P[][] = [
  [[214, 672], [222, 740], [232, 920], [240, 1060], [250, 1140], [265, 1155], [300, 1160], [325, 1144], [350, 1165], [375, 1182], [400, 1172], [420, 1160], [440, 1178], [480, 1185], [515, 1170], [545, 1192], [580, 1184], [640, 1186], [686, 1180]],
  [[216, 1178], [228, 1120], [238, 990], [248, 800], [262, 690], [280, 706], [310, 712], [345, 742], [362, 700], [382, 660], [410, 668], [440, 665], [470, 634], [500, 650], [530, 668], [560, 658], [600, 692], [640, 668], [686, 676]],
];
const cyanThin: P[][] = [
  [[216, 670], [256, 649], [290, 664], [345, 652], [400, 662], [450, 664], [475, 645], [520, 664], [580, 652], [640, 670], [686, 670]],
  [[216, 668], [360, 668], [500, 668], [686, 668]],
  [[216, 672], [300, 676], [420, 674], [540, 680], [686, 672]],
  [[262, 690], [300, 712], [345, 738], [365, 685], [380, 655], [420, 655], [450, 668]],
  [[216, 1178], [270, 1188], [330, 1180], [420, 1188], [520, 1176], [600, 1185], [686, 1178]],
  [[216, 1182], [320, 1184], [450, 1180], [600, 1180], [686, 1182]],
];
const PT = styled.text<{ $s: number; $c?: string }>`
  font: ${p => p.$s}px ${SERIF};
  fill: ${p => p.$c || '#111'};
`;
const S2 = ({ x, y, w, s = 15.5, c, children }: { x: number; y: number; w: number; s?: number; c?: string; children: string }) => (
  <PT x={x} y={y} $s={s} $c={c} textLength={w} lengthAdjust="spacingAndGlyphs">{children}</PT>
);
const EyePlot = () => {
  const ticks: string[] = [];
  for (let n = 1; n <= 28; n++) {
    const x = Math.round(X0 + n * NS) + 0.5;
    const l = n % 10 === 0 ? 25 : n % 5 === 0 ? 12 : 5;
    ticks.push(`M${x} 354v${l}M${x} 755v-${l}`);
  }
  for (let n = 0; n <= 60; n++) {
    const y = Math.round(353.7 + n * 6.7) + 0.5;
    ticks.push(`M1446 ${y}h${n % 10 === 0 ? 25 : n % 5 === 0 ? 12 : 5}`);
    if (n % 10 === 0 && n) ticks.push(`M1916 ${y}h4`);
  }
  return (
    <svg width="542" height="593" viewBox="1378 299 542 593" fill="none">
      <clipPath id="area"><rect x="1445" y="353" width="480" height="403" /></clipPath>
      <S2 x={1375} y={321} w={229} s={24}>CSIMPLE_V1_02 J1 5)</S2>
      <S2 x={1609} y={321} w={291} s={24}>PMOD2BNCSIMPLE_V1_02</S2>
      <S2 x={1906} y={321} w={21} s={24}>J1</S2>
      <S2 x={1574} y={346} w={197}>case0 - Sun Nov 05 22:03:15 2023</S2>
      <path d="M1925 353.500H1445.500V755.500H1925" stroke="#000" />
      <path d={ticks.join('')} stroke="#000" />
      <path d="M1446 554.500H1925M1446 634.500H1925" stroke="#000" strokeDasharray="3 2.500" />
      <g clipPath="url(#area)">
        {[0, 1, 2].map(k => (
          <g key={k} transform={`translate(${(k * 10 * NS).toFixed(1)} 0)`} stroke="#000">
            {bold.map((b, i) => <React.Fragment key={i}><path d={spline(b)} strokeWidth="1.300" /><path d={spline(b, 3.5)} strokeWidth=".9" /><path d={spline(b, -3)} strokeWidth=".7" /></React.Fragment>)}
            {thin.map((b, i) => <path key={i} d={spline(b)} strokeWidth=".8" />)}
          </g>
        ))}
        {[0, 1, 2].map(k => (
          <g key={k} transform={`translate(${(k * 10 * NS).toFixed(1)} 0)`} stroke="#0ff0f8">
            {cyan.map((b, i) => <React.Fragment key={i}><path d={spline(b)} strokeWidth="2.200" /><path d={spline(b, 4)} strokeWidth="1" /></React.Fragment>)}
            {cyanThin.map((b, i) => <path key={i} d={spline(b)} strokeWidth="1.400" />)}
          </g>
        ))}
      </g>
      <path d="M1446 588.500H1925" stroke="#3cdce4" strokeDasharray="3 2.500" />
      <rect x="1842" y="564" width="48" height="17" fill="#fff" />
      <S2 x={1844} y={577.500} w={45}>2.000 V</S2>
      <S2 x={1844} y={611.500} w={45} c="#3ce0ea">1.500 V</S2>
      <S2 x={1819} y={658} w={70}>800.000 mV</S2>
      {[5, 4, 3, 2, 1, 0].map(v => <S2 key={v} x={1431} y={Y0 - v * VOLT + 5} w={7.5}>{String(v)}</S2>)}
      <S2 x={1426} y={760} w={12.5}>-1</S2>
      <S2 x={1441.500} y={774} w={7.5}>0</S2>
      <S2 x={1603} y={774} w={14.5}>10</S2>
      <S2 x={1768} y={774} w={14.5}>20</S2>
      <S2 x={1664} y={802} w={56}>Time [ns]</S2>
      <g transform="translate(1393.500 590) rotate(-90)"><S2 x={0} y={0} w={67}>Voltage [V]</S2></g>
      <path d="M1925 817.500H1391.500V881.500H1925" stroke="#000" />
      <path d="M1525 837.500h76" stroke="#000" />
      <path d="M1525 857.500h76" stroke="#3cdce4" />
      <S2 x={1627} y={842} w={216}>PMOD2BNCSIMPLE_V1_02 BNC8 5</S2>
      <S2 x={1627} y={862} w={195}>PMOD2BNCSIMPLE_V1_02 J1 5</S2>
    </svg>
  );
};

/* ---------- taskbar art ---------- */
const Chrome = ({ badge, text }: { badge?: string; text?: string }) => (
  <S w={30} h={28}>
    <path d="M14 13L3.500 7a12 12 0 0 1 21 0z" fill="#ea4335" /><path d="M14 13l-3 12A12 12 0 0 1 3.500 7z" fill="#34a853" /><path d="M14 13l10.500-6A12 12 0 0 1 12 25z" fill="#fbbc05" />
    <circle cx="14" cy="13" r="5.800" fill="#fff" /><circle cx="14" cy="13" r="4.500" fill="#4285f4" />
    {badge && <circle cx="21" cy="19" r="7.500" fill={badge} />}
    {badge && !text && <circle cx="21" cy="19" r="1" fill="#fff" />}
    {text && <text x="21" y="22" textAnchor="middle" fontSize="7" fill="#fff" fontFamily="Noto Sans CJK KR">{text}</text>}
  </S>
);
const Planets = () => (
  <S w={74} h={38} vb="8 0 74 38">
    <g stroke="#c5d2dc"><ellipse cx="78" cy="19" rx="62" ry="26" /><ellipse cx="78" cy="19" rx="44" ry="20" /><ellipse cx="78" cy="19" rx="30" ry="14" /></g>
    <circle cx="13" cy="19" r="4" fill="#b4563c" /><circle cx="27" cy="19" r="6" fill="#3a78b8" /><path d="M24 16l4-1 2 4-3 4z" fill="#5a9e4c" />
    <circle cx="43" cy="19" r="6" fill="#c88434" /><circle cx="60" cy="19" r="5.500" fill="#b8b0b8" /><circle cx="58" cy="18" r="3" fill="#dcd4cc" />
    <path d="M82 1l-4 4-3-2-2 4-4 0v4l-4 2 2 4-3 3 3 3-2 4 4 1v4l4 0 2 4 3-2 4 4z" fill="#f4901c" /><circle cx="84" cy="19" r="13" fill="#fb7a10" />
  </S>
);
const taskIcons = [
  <S key="tv" w={18} h={18}><path d="M1 0v3h10V0M1 18v-3h10v3M1.500 6h9v6h-9z" stroke="#eee" strokeWidth="1.300" /><path d="M15 0v18" stroke="#eee" strokeDasharray="3 1" /><path d="M13.500 5h3v3h-3z" fill="#eee" /></S>,
  <S key="edge" w={26} h={26}><circle cx="13" cy="13" r="12" fill="#1a78c8" /><path d="M1 12C2 4 8 1 13 1c8 0 12 6 12 11 0 4-3 6-7 6-3 0-4-1-3-3 1-4-2-7-6-7-4 0-7 2-8 4z" fill="#3cc8b4" /><path d="M9 13c-2 5 2 12 11 10-3 2-7 3-11 1-5-3-4-9 0-11z" fill="#0d4f96" /><path d="M13 12c-2 4 2 7 7 6-4 1-6-2-5-4z" fill="#1e1d1e" /></S>,
  <S key="fold" w={24} h={22}><path d="M1 1h8l2 3h11v15H1z" fill="#f7c94c" /><path d="M1 7h22v13H1z" fill="#fbdd7e" /><path d="M5 21v-9h14v9h-4v-5H9v5z" fill="#3d8fd8" /></S>,
  <S key="store" w={24} h={26}><path d="M8 6V2h8v4" stroke="#3ab0ea" strokeWidth="2" /><path d="M1 6h22v14q0 4-4 4H5q-4 0-4-4z" fill="#f6f6f6" /><path d="M7 10h4v4H7z" fill="#e8502c" /><path d="M12.500 10h4v4h-4z" fill="#7cb82c" /><path d="M7 15.500h4v4H7z" fill="#2c9ce8" /><path d="M12.500 15.500h4v4h-4z" fill="#f4b41c" /></S>,
  <S key="mail" w={26} h={24}><path d="M1 10L13 1l12 9v13H1z" fill="#1668b4" /><path d="M4 9h18l-9 9z" fill="#fff" /><path d="M1 10l12 9 12-9v13H1z" fill="#38a4ec" /></S>,
  <Chrome key="ch" />,
  <S key="git" w={26} h={26}><g transform="rotate(45 13 13)"><path d="M4 4h8.500v8.500H4z" fill="#f08a80" /><path d="M13.500 4H22v8.500h-8.500z" fill="#9cd890" /><path d="M4 13.500h8.500V22H4z" fill="#88aef0" /><path d="M13.500 13.500H22V22h-8.500z" fill="#f8d878" /></g><path d="M10 6l3 3v11M13 11l5 4" stroke="#222" strokeWidth="2" /><circle cx="13" cy="19" r="2.200" fill="#222" /><circle cx="18" cy="15" r="2" fill="#222" /></S>,
  <Chrome key="c2" badge="#c43c14" />,
  <S key="arrow" w={24} h={26}><path d="M0 0h24v26H0z" fill="#6c6a6c" /><path d="M2 6a12 11 0 0 1 20 0l1 7H2z" fill="#86a040" /><path d="M1 15h22a11 11 0 0 1-22 0z" fill="#c8181c" /><path d="M0 8h9v9H0z" fill="#1c9cc4" /><path d="M8 3l13 10L8 22z" fill="#fff" /></S>,
  <Chrome key="c3" badge="#7c50b4" text="정현" />,
  <S key="al" w={26} h={26}><path d="M4 3l7 4h11M4 10h7l4-3M4 17h8M12 14h10M14 22h8" stroke="#22dc30" strokeWidth="2" /><g fill="#22f030"><circle cx="4" cy="3" r="2.500" /><circle cx="4" cy="10" r="2.500" /><circle cx="4" cy="17" r="2.500" /><circle cx="22" cy="6" r="2.500" /><circle cx="22" cy="14" r="2.500" /><circle cx="22" cy="22" r="2.500" /></g><path d="M2 23C10 21 14 9 20 5l-3 16M9 15h9" stroke="#f01c18" strokeWidth="2.800" /></S>,
  <S key="sig" w={26} h={26}><path d="M1 1h24v18l-3 3v3H4v-3l-3-3z" fill="#0a8010" /><path d="M5 23h16" stroke="#f0e030" strokeWidth="2.500" strokeDasharray="2 1" /><text x="2" y="9" fontSize="8" fill="#fff" fontFamily="Liberation Sans">Sig</text><text x="2" y="18" fontSize="8" fill="#fff" fontFamily="Liberation Sans" textLength="22">Xplorer</text></S>,
  <S key="wave" w={26} h={26}><path d="M4 6v15M2 8l2-3 2 3M2 19l2 3 2-3M6 14h14M9 12l-3 2 3 2M17 12l3 2-3 2" stroke="#1018f0" strokeWidth="1.800" /><path d="M6 12c1-9 4-7 6-3 2-6 4-5 5 0 2-5 4-2 4 6 0 6 1 8 3 8" stroke="#0a0a14" strokeWidth="1.500" /></S>,
];
const running = [false, false, true, false, false, false, true, true, false, true, true, true, true];

/* header, value, column width, header text width, value text width */
const cols: [string, string, number, number, number][] = [
  ['SimID', '1', 41, 31, 5], ['Driver', 'PMOD2BNCSIMPLE_V1_02.J1.5', 162, 33, 153], ['Receiver', 'PMOD2BNCSIMPLE_V1_02.BNC8.5', 178, 48, 168],
  ['Cycle', '1', 40, 31, 5], ['GlitchTol', '0.05', 58, 49, 22], ['FTSMode', 'Typ', 61, 52, 19], ['Glitch', 'PASS', 41, 32, 29], ['Monotonic', 'PASS', 68, 59, 29], ['NoiseMarg', '247.272', 66, 59, 40],
];
const mainMenu: [string, number][] = [['File', 18], ['Edit', 20], ['View', 27], ['Set', 17], ['Analyze', 42], ['Help', 25]];
const winMenu: [string, number][] = [['File', 18], ['Edit', 20], ['Zoom', 31.5], ['Graph', 32], ['Tools', 28.5], ['View', 26], ['Help', 25]];

const PaneStrip = ({ text }: { text: string }) => (
  <Strip>
    <S w={7} h={8}><path d="M.5 1l6 6M6.500 1l-6 6" stroke="#000" strokeWidth="1.500" /></S>
    <S w={9} h={20}><path d="M6 6v6L3 9z" fill="#000" /></S>
    <Pin />
    <StripText>{text}</StripText>
    <HGrip $w={8} />
  </Strip>
);

const SigWave = () => (
  <Win>
    <TitleBar $h={29} $pad="0 64px 2px 9px" $gap={6}>
      <S w={15} h={15}><path d="M1 13C1 4 3 1 5 1s2 3 3 5c1-5 3-5 4-2s1 6 2 9" stroke="#30d030" strokeWidth="1.400" /><path d="M2 9h11M4 7L2 9l2 2M11 7l2 2-2 2" stroke="#e01818" strokeWidth="1.500" /></S>
      <Label w={101} size={12.5}>Untitled - SigWave</Label>
      <Caption $gap={35}>
        <S w={10} h={10}><path d="M0 4.500h10" stroke="#000" /></S>
        <S w={10} h={10}><path d="M.5.500h9v9h-9z" stroke="#000" /></S>
      </Caption>
    </TitleBar>
    <MenuBar $h={24} $pad="1px 4px 0 3px">
      <Grip $h={19} $tight />
      {winMenu.map(([m, w], i) => <WinMenuItem key={m} $first={i === 0}><Label w={w} size={12.5} hot>{m}</Label></WinMenuItem>)}
      <WinBrand><Cadence /></WinBrand>
    </MenuBar>
    <RedRule $h={4} />
    <Toolbars $h={34}>
      <Group $w={98} $cell={27}><Grip $h={23} />
        <Cell><Doc /></Cell>
        <Cell><S w={22} h={18}><path d="M1 16V5h6l2 2h7v4M1 16l5-6h14l-5 6z" fill="#8a8410" stroke="#000" /><path d="M1.500 15V5.500h5l2 2h7V10H6z" fill="#f4e87c" /><path d="M12 3c3-3 6-1 7 2M16 4l3 2 2-3" stroke="#e02020" strokeWidth="1.400" /></S></Cell>
        <Cell><Doc><path d="M5 10c1-4 6-4 8-2M13 5v3h-3M14 12c-1 4-6 4-8 2M6 17v-3h3" stroke="#108018" strokeWidth="1.800" /></Doc></Cell>
      </Group>
      <Group $w={72} $cell={27}><Grip $h={23} />
        <Cell><S w={20} h={20}><path d="M2 2h8v12H2zM8 6h8v13H8zM4 5h4M4 8h3M10 9h4M10 12h4M10 15h4" stroke="#a3a1a3" strokeWidth="1.400" /></S></Cell>
        <Cell><S w={20} h={20}><path d="M2 3h13v14H2zM6 1h5v3H6z" fill="#a3a1a3" /><path d="M8 8h9v11H8zM10 11h5M10 14h5" fill="#cdcbcd" stroke="#a3a1a3" strokeWidth="1.400" /></S></Cell>
      </Group>
      <Group $w={232} $cell={27}><Grip $h={23} />
        {['M3 20h4v-4H3z', 'M4 7h8', 'M8 3v8M4 7h8', 'M4 7h8M8 4l-3 3', 'M4 8h8', 'M8 3v8M5 7h6', 'M5 5h6v4'].map((d, i) => <Cell key={i}>{gLens(gl(d))}</Cell>)}
        <Cell><S w={22} h={22}><circle cx="9" cy="8" r="6.500" fill="#a09ea0" /><circle cx="14" cy="9" r="6" fill="#a09ea0" /><path d="M6 12l5 8M14 13l6 6" stroke="#a09ea0" strokeWidth="4.500" /></S></Cell>
      </Group>
      <Group $w={206} $cell={27}><Grip $h={23} />
        <Cell><K d="M1 16h18M10 3v12M7 11l3 4 3-4" /></Cell>
        <Cell><K d="M3 1v18M4 10h13M8 7l-4 3 4 3" /></Cell>
        <Cell><K d="M1 8.500h18M1 12.500h18M10 0v7M8 4l2 3 2-3M10 20v-6M8 17l2-3 2 3" /></Cell>
        <Cell><K d="M8.500 1v18M12.500 1v18M0 10h7M4 8l3 2-3 2M20 10h-6M17 8l-3 2 3 2" /></Cell>
        <Cell><K d="M3 17L17 3M12 3h5v5M3 12v5h5" /></Cell>
        <Cell><S w={22} h={20}><path d="M3 17L13 7M3 12v5h5" stroke="#000" strokeWidth="1.500" /><path d="M14 2h7M17.500 2v7" stroke="#138a8a" strokeWidth="1.800" /></S></Cell>
        <Cell><K d="M5 6V4h10v2M10 4v13M8 17h4" c="#138a8a" w={1.8} /></Cell>
      </Group>
      <Group $w={150} $cell={27}><Grip $h={23} />
        <Cell><WaveBox><path d="M2 13l3-6 3 7 3-6 2 4 4-5" stroke="#e02828" strokeWidth="1.400" /></WaveBox></Cell>
        <Cell><WaveBox bg="#d4d0f4"><path d="M2 6h2V3.500h3V6h4V3.500h3V6h3" stroke="#188a28" strokeWidth="1.400" /><path d="M2 11.500h2V9h3v2.500h4V9h3v2.500h3" stroke="#2030e0" strokeWidth="1.400" /><path d="M2 17h2v-2.500h3V17h4v-2.500h3V17h3" stroke="#a020a0" strokeWidth="1.400" /></WaveBox></Cell>
        <Cell><WaveBox><path d="M3 3v12h13M6 15V7M9 15v-4M12 15v-3" stroke="#e02828" strokeWidth="1.400" /></WaveBox></Cell>
        <Cell $on="blue"><WaveBox><path d="M2 4h3l8 12h5M2 16h3l8-12h5" stroke="#109020" strokeWidth="2" /></WaveBox></Cell>
      </Group>
    </Toolbars>
    <Toolbars $h={35}>
      <Group $w={180} $cell={27}><Grip $h={24} />
        {[undefined, '4 2', '3 1.500', '4 1.500 2 1.500', '3 2 1 2'].map((d, i) => <Cell key={i}><LineStyle dash={d} /></Cell>)}
        <Cell $on="white"><DIcon /></Cell>
      </Group>
      <Group $w={314} $cell={27.1}><Grip $h={24} />
        {[1, 2, 3, 4, 5, 6, 7, 8, 9, 10].map(t => <Cell key={t}><LineWidth t={t} /></Cell>)}
        <Cell $on="white"><DIcon bars /></Cell>
      </Group>
      <Group $w={264} $cell={27}><Grip $h={24} />
        {marks.map((m, i) => <Cell key={i} $on={i === 1 ? 'white' : undefined}><Marker d={m} /></Cell>)}
      </Group>
    </Toolbars>
    <WinFoot>
      <SideTools>
        <HGrip $w={23} />
        <SideList>{Array.from({ length: 22 }, (_, i) => <SideCell key={i} $on={i === 0}><GridIcon last={i === 21} /></SideCell>)}</SideList>
      </SideTools>
      <WinMain>
        <WinBody>
          <Tree>
            <TreeRows>
              <TreeRow $in={0}><PlusBox /><Stub /><TreeIcon><S w={15} h={14}><path d="M.5.500h14v13h-12l-2-2z" fill="#4c4a10" stroke="#000" /><path d="M4 1h7v6H4z" fill="#ddd" /><path d="M4 9h7v4H4z" fill="#000" /></S></TreeIcon><Label w={46}>SigWave</Label></TreeRow>
              <TreeRow $in={1}><PlusBox /><Stub /><TreeIcon><Folder eye /></TreeIcon><Label w={31}>Views</Label></TreeRow>
              <TreeRow $in={2}><PlusBox plus /><Stub /><TreeIcon><S w={15} h={15}><path d="M7.500 0l2 2 3-1 .5 3 2 2-1 2 1 3-3 1-1 2-3-1-3 1-1-2-3-1 1-3-1-2 2-2 .5-3 3 1z" fill="#f8e020" stroke="#e01818" strokeWidth="1.600" /><path d="M3 3l9 9" stroke="#e01818" strokeWidth="2" /><path d="M7.500 3v3M7.500 9v3M3 7.500h3M9 7.500h3" stroke="#a02000" /></S></TreeIcon><Label w={50}>Cartesian</Label></TreeRow>
              <TreeRow $in={2}><PlusBox plus /><Stub /><TreeIcon><S w={15} h={14}><path d="M.5.500h14v13H.5z" fill="#ffff20" stroke="#000" strokeDasharray="2 1" /><path d="M3 3l2 2M12 3l-2 2M3 11l2-2M12 11l-2-2M7.500 2v2M7.500 10v2" stroke="#444" /></S></TreeIcon><Label w={67}>Eye Diagram</Label></TreeRow>
              <TreeRow $in={1}><PlusBox /><Stub /><TreeIcon><Folder /></TreeIcon><Label w={99}>Waveform Library</Label></TreeRow>
              <TreeRow $in={2}><PlusBox plus /><Stub /><TreeIcon><Folder /></TreeIcon><Label w={78}>sim1: (PMOD2</Label></TreeRow>
            </TreeRows>
            <HScroll><Btn3d $w={16} $h={18}><Tri d="l" /></Btn3d><Btn3d $w={21} $h={18} /><Spacer /><Btn3d $w={16} $h={18}><Tri d="r" /></Btn3d></HScroll>
          </Tree>
          <PlotCol><Plot><EyePlot /></Plot></PlotCol>
        </WinBody>
        <WinStatus>
          <ReadyText><Label w={33} size={12.5}>Ready</Label></ReadyText>
          <Coord $w={17}><Label w={11}>X:</Label></Coord><Field $w={81} />
          <YCoord $w={21}><Label w={11}>Y:</Label></YCoord><Field $w={90} />
        </WinStatus>
      </WinMain>
    </WinFoot>
  </Win>
);

export default function App() {
  const group = (names: string[]) => names.map(n => <Cell key={n} $on={n === 'sine' ? 'box' : undefined}><I n={n} /></Cell>);
  return (
    <Screen>
      <Global />
      <TitleBar $h={23} $pad="0 20px 0 2px" $gap={5}>
        <S w={16} h={17}><path d="M0 0h16v12l-2 2v3H2v-3l-2-2z" fill="#0a7c14" /><path d="M2 3h3M4 6l3-3M2 9h2M6 9h2v-2M10 9h4M12 7v4" stroke="#fff" /><path d="M3 15h10" stroke="#e8e030" strokeWidth="2" strokeDasharray="1 1" /></S>
        <Label w={525} size={12.5} color="#8f8d8f">SigXplorer OrCAD PCB Designer w/ PSpice: N08600 1.0  Project: C:.../PMOD2BNC_SIMPLE_V1_0</Label>
        <Caption $gap={35}>
          <S w={10} h={10}><path d="M0 4.500h10" stroke="#8f8d8f" /></S>
          <S w={10} h={10}><path d="M.5 2.500h7v7h-7zM2.500 2V.5h7v7H8" stroke="#8f8d8f" /></S>
          <S w={11} h={11}><path d="M.5.500l10 10M10.500.500l-10 10" stroke="#8f8d8f" /></S>
        </Caption>
      </TitleBar>
      <MainMenuBar $h={20} $pad="0 0 1px 7px">
        {mainMenu.map(([m, w]) => <Label key={m} w={w} size={12.5} hot>{m}</Label>)}
        <Brand><Cadence /></Brand>
      </MainMenuBar>
      <RedRule $h={3} />
      <Toolbars $h={35}>
        <ToolStripRow>
          <Group $w={106} $cell={31.2}><Grip $tight />{group(['new', 'open', 'save'])}</Group>
          <Group $w={323} $cell={31.1}><Grip $tight />{group(['undo', 'pad', 'erase', 'chip', 'copy', 'move', 'del', 'mirror', 'rotl', 'rotr'])}</Group>
          <Group $w={171} $cell={31.1}><Grip $tight />{group(['zwin', 'zfit', 'zin', 'zout', 'zprev'])}</Group>
          <Group $w={230} $cell={31}><Grip $tight />{group(['wdoc', 'pdoc', 'sine', 'book', 'coil', 'spool', 'help'])}</Group>
        </ToolStripRow>
      </Toolbars>
      <Workspace>
        <LeftDock>
          <DockCol $w={35}>
            <VGroup $h={230} $shift={2}><HGrip $w={23} />{leftA.map((p, i) => <VCell key={i}><S w={22} h={22} vb="0 0 24 24">{p}</S></VCell>)}</VGroup>
            <VGroup $h={199} $shift={2}><HGrip $w={23} />{leftB.map((p, i) => <VCell key={i}><S w={21} h={21} vb="0 0 24 24">{p}</S></VCell>)}</VGroup>
          </DockCol>
          <DockCol $w={48}>
            <VGroup $h={75}><HGrip $w={38} />
              {[false, true].map(t => <VCell key={String(t)} $split><S w={22} h={24} vb="0 0 24 24">{gate(t)}</S><Down /></VCell>)}
            </VGroup>
            <VGroup $h={200}><HGrip $w={38} />
              <VCell><S w={23} h={23} vb="0 0 24 24">{pcb('c', 0)}</S></VCell>
              <VCell $split><S w={23} h={23} vb="0 0 24 24">{pcb('c', 1)}</S><Down /></VCell>
              <VCell $split><S w={23} h={23} vb="0 0 24 24">{pcb('c', 2)}</S><Down /></VCell>
              {[0, 2, 1].map(k => <VCell key={k}><S w={22} h={22} vb="0 0 24 24">{pcb('g', k)}</S></VCell>)}
            </VGroup>
            <VGroup $h={75}><HGrip $w={38} />
              <VCell><S w={25} h={25} vb="0 0 24 24">{stair}</S></VCell>
              <VCell $split><S w={23} h={25} vb="0 0 24 24">{stack}</S><Down /></VCell>
            </VGroup>
          </DockCol>
        </LeftDock>
        <Center>
          <Canvas><Schematic /></Canvas>
          <DockRow>
            <DockPane $w={732}>
              <PaneStrip text="Results" />
              <ResultsBody>
                <Table>
                  <Row $head>{cols.map(c => <Th key={c[0]} $w={c[2]}><Label w={c[3]} size={11.5} font={ARIAL} bold>{c[0]}</Label></Th>)}</Row>
                  <Row>{cols.map(c => <Td key={c[0]} $w={c[2]} $key={c[0] === 'SimID'}><Label w={c[4]} size={11.5} font={ARIAL}>{c[1]}</Label></Td>)}</Row>
                </Table>
                <HScroll><Btn3d $w={16} $h={18}><Tri d="l" /></Btn3d><Btn3d $w={469} $h={18} /><Spacer /><Btn3d $w={17} $h={18}><Tri d="r" /></Btn3d></HScroll>
              </ResultsBody>
            </DockPane>
            <DockPane $w={734}>
              <PaneStrip text="Comman" />
              <CmdBody>
                <Log>
                  <LogLines>
                    <Label w={518} size={11} font={ARIAL}>Simulation (PMOD2BNCSIMPLE_V1_02 J1 5) PMOD2BNCSIMPLE_V1_02 J1 5 Pulse Typ Reflection started</Label>
                    <Label w={189} size={11} font={ARIAL}>Using waveform resolution 0.200000 ns.</Label>
                    <Label w={519} size={11} font={ARIAL}>Simulation (PMOD2BNCSIMPLE_V1_02 J1 5) PMOD2BNCSIMPLE_V1_02 J1 5 Pulse Typ Reflection finished</Label>
                  </LogLines>
                  <VScroll><Btn3d $w={17} $h={8} /><Btn3d $w={17} $h={18}><Tri d="d" /></Btn3d></VScroll>
                </Log>
                <Prompt><Label w={56} size={11} font={ARIAL}>{'Command >'}</Label></Prompt>
              </CmdBody>
            </DockPane>
          </DockRow>
          <Tab><Label w={78} size={12}>Measurements</Label></Tab>
        </Center>
        <RightDock>
          <PaneHead>
            <HeadDots />
            <Label w={56} size={11}>Parameters</Label>
            <HeadTools>
              <PinSlot><Pin /></PinSlot>
              <S w={11} h={8}><path d="M3 2h6L6 5z" fill="#777" /></S>
              <S w={8} h={8}><path d="M1 1l6 6M7 1L1 7" stroke="#000" strokeWidth="1.800" /></S>
            </HeadTools>
          </PaneHead>
          <ParamTable>
            <ParamHead><Th $w={175}><Label w={31} size={11.5} font={ARIAL} bold>Name</Label></Th><Th $w={175}><Label w={31} size={11.5} font={ARIAL} bold>Value</Label></Th></ParamHead>
            <ParamRow>
              <ParamCell $w={175}><S w={11} h={11}><path d="M.5.500h10v10H.5zM3 5.500h5M5.500 3v5" stroke="#000" /></S><Label w={38} size={10.5} font={ARIAL}>CIRCUIT</Label></ParamCell>
              <ParamCell $w={176} />
            </ParamRow>
          </ParamTable>
        </RightDock>
      </Workspace>
      <Status>
        <StatusCell $w={1600}><Label w={18} size={11} font={ARIAL}>Idle</Label></StatusCell>
        <StatusCell $w={54} $green />
        <StatusCell $w={133} />
        <CoordCell $w={131}><Label w={84} size={12} font={ARIAL}>5525.00, 4246.50</Label></CoordCell>
      </Status>
      <Taskbar>
        <Start><S w={16} h={16}><path d="M0 2.300l7-1v6.200H0zM8 1.100L16 0v7.500H8zM0 8.500h7v6.200l-7-1zM8 8.500h8V16l-8-1.100z" fill="#fff" /></S></Start>
        <Search>
          <S w={17} h={17}><circle cx="10.500" cy="6.500" r="5.500" stroke="#222" strokeWidth="1.300" /><path d="M6.500 10.500L1 16" stroke="#222" strokeWidth="1.300" /></S>
          <Label w={27} size={14.5}>찾기</Label>
          <PlanetSlot><Planets /></PlanetSlot>
        </Search>
        {taskIcons.map((t, i) => <Task key={i} $line={running[i]} $active={i === 12} $w={i === 0 ? 49.5 : i === 1 ? 50 : undefined}>{t}</Task>)}
        <Tray>
          <TrayItem $w={33}><S w={27} h={26}><path d="M5 17a5 5 0 0 1 0-9c2-7 10-8 13-2 6 0 8 8 3 11z" fill="#b4cdf8" /><path d="M8 15l-2 7q2 3 4 0zM16 15l-2 7q2 3 4 0z" fill="#2c7cf0" stroke="#2c7cf0" strokeWidth="2" /><circle cx="19" cy="6" r="6" fill="#c42b1c" /><path d="M19 3v6M17.500 4l1.500-1" stroke="#fff" /></S></TrayItem>
          <TrayItem $w={39}><Label w={29} size={13} color="#fff">20°C</Label></TrayItem>
          <TrayItem $w={37}><Label w={12} size={13} color="#fff">비</Label></TrayItem>
          <TrayItem $w={22}><S w={13} h={8}><path d="M1 7l5.500-6L12 7" stroke="#fff" strokeWidth="1.300" /></S></TrayItem>
          <TrayItem $w={24}><S w={17} h={14}><path d="M1 5h2l4-4v12L3 9H1zM9 5q2 2 0 4M11 3q4 4 0 8M13 1q6 6 0 12" stroke="#fff" strokeWidth="1.100" /></S></TrayItem>
          <TrayItem $w={25}><S w={17} h={15}><path d="M5 2.500h11v8H5M1 1h4v4H1zM3 5v8h3M8 13.500h6M11 10.500v3" stroke="#fff" strokeWidth="1.100" /></S></TrayItem>
          <TrayItem $w={13}><Label w={12} size={16} color="#fff">A</Label></TrayItem>
          <Clock><Label w={60} size={12} color="#fff">오후 10:04</Label><Label w={66} size={12} color="#fff">2023-11-05</Label></Clock>
          <TrayItem $w={46}><NoticeSlot><S w={26} h={26}><path d="M1 2h16v13H7l-4 3v-3H1z" fill="#fff" /><path d="M4 5h10M4 8h10M4 11h7" stroke="#1e1d1e" /><circle cx="16.500" cy="17.500" r="7.500" fill="#3a393a" stroke="#8a898a" /><text x="16.500" y="21.500" textAnchor="middle" fontSize="11" fontWeight="700" fill="#fff" fontFamily="Open Sans">8</text></S></NoticeSlot></TrayItem>
          <PeekEdge />
        </Tray>
      </Taskbar>
      <SigWave />
    </Screen>
  );
}
